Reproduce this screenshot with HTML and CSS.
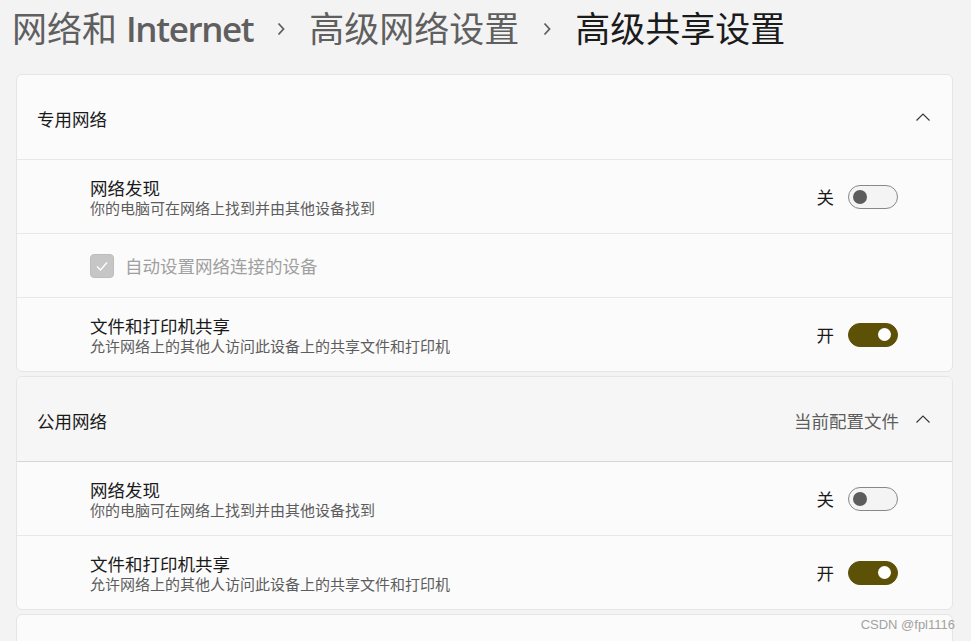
FILE: index.html
```html
<!DOCTYPE html>
<html lang="zh-CN">
<head>
<meta charset="UTF-8">
<meta name="viewport" content="width=device-width, initial-scale=1.0">
<title>高级共享设置</title>
<link rel="stylesheet" href="styles.css">
</head>
<body>

<div class="page">
<h1 class="crumbs">
<span class="crumb">网络和 <span class="latin">Internet</span></span>
<svg class="sep" width="10" height="14" viewBox="0 0 10 14"><path d="M2.5 1.5 L7.5 7 L2.5 12.5" fill="none" stroke="#5f5f5f" stroke-width="1.8"/></svg>
<span class="crumb">高级网络设置</span>
<svg class="sep" width="10" height="14" viewBox="0 0 10 14"><path d="M2.5 1.5 L7.5 7 L2.5 12.5" fill="none" stroke="#5f5f5f" stroke-width="1.8"/></svg>
<span class="crumb current">高级共享设置</span>
</h1>

<!-- 专用网络 -->
<section class="card">
<div class="card-head">
<span class="card-title">专用网络</span>
<div class="head-right">
<svg class="caret" width="16" height="10" viewBox="0 0 16 10"><path d="M1.5 8.5 L8 2 L14.5 8.5" fill="none" stroke="#3a3a3a" stroke-width="1.2"/></svg>
</div>
</div>
<div class="row">
<div class="row-text">
<div class="row-title">网络发现</div>
<div class="row-sub">你的电脑可在网络上找到并由其他设备找到</div>
</div>
<div class="row-ctl"><span class="state">关</span><span class="toggle"><span class="knob"></span></span></div>
</div>
<div class="row row-check">
<span class="checkbox">
<svg width="14" height="12" viewBox="0 0 14 12"><path d="M2 6.5 L5.5 10 L12 2.5" fill="none" stroke="#ffffff" stroke-width="1.4"/></svg>
</span>
<span class="check-label">自动设置网络连接的设备</span>
</div>
<div class="row">
<div class="row-text">
<div class="row-title">文件和打印机共享</div>
<div class="row-sub">允许网络上的其他人访问此设备上的共享文件和打印机</div>
</div>
<div class="row-ctl"><span class="state">开</span><span class="toggle on"><span class="knob"></span></span></div>
</div>
</section>

<!-- 公用网络 -->
<section class="card">
<div class="card-head active">
<span class="card-title">公用网络</span>
<div class="head-right">
<span class="profile">当前配置文件</span>
<svg class="caret" width="16" height="10" viewBox="0 0 16 10"><path d="M1.5 8.5 L8 2 L14.5 8.5" fill="none" stroke="#3a3a3a" stroke-width="1.2"/></svg>
</div>
</div>
<div class="row first-row">
<div class="row-text">
<div class="row-title">网络发现</div>
<div class="row-sub">你的电脑可在网络上找到并由其他设备找到</div>
</div>
<div class="row-ctl"><span class="state">关</span><span class="toggle"><span class="knob"></span></span></div>
</div>
<div class="row">
<div class="row-text">
<div class="row-title">文件和打印机共享</div>
<div class="row-sub">允许网络上的其他人访问此设备上的共享文件和打印机</div>
</div>
<div class="row-ctl"><span class="state">开</span><span class="toggle on"><span class="knob"></span></span></div>
</div>
</section>

<!-- 所有网络 (被截断) -->
<section class="card card-cut"></section>
</div>

<div class="watermark">CSDN @fpl1116</div>

</body>
</html>
```

FILE: styles.css
```css
body {
margin: 0;
height: 641px;
overflow: hidden;
background-color: #f3f3f3;
font-family: "Noto Sans CJK SC", sans-serif;
color: #1a1a1a;
}

.page {
padding: 7px 18px 0 16px;
}

.crumbs {
display: flex;
align-items: center;
gap: 23px;
margin: 0 0 23px -4px;
height: 44px;
font-family: "Open Sans", "Noto Sans CJK SC", sans-serif;
font-size: 35px;
font-weight: 400;
line-height: 44px;
white-space: nowrap;
}

.crumb {
color: #5f5f5f;
}

.crumb.current {
color: #1b1b1b;
}

.latin {
font-weight: 600;
letter-spacing: -1.4px;
}

.sep {
flex: none;
}

.card {
background-color: #fbfbfb;
border: 1px solid #e5e5e5;
border-radius: 6px;
margin-bottom: 4px;
overflow: hidden;
}

.card-head {
display: flex;
align-items: center;
justify-content: space-between;
height: 84px;
padding: 2px 21px 0 20px;
box-sizing: border-box;
font-size: 17.5px;
}

.card-head .caret {
margin-top: -3px;
}

.card-head.active {
background-color: #f6f6f6;
}

.head-right {
display: flex;
align-items: center;
gap: 16px;
}

.profile {
color: #5d5d5d;
}

.row {
display: flex;
align-items: center;
justify-content: space-between;
min-height: 74px;
padding: 0 54px 0 73px;
border-top: 1px solid #e8e8e8;
box-sizing: border-box;
}

.row.first-row {
border-top-color: #d6d6d6;
}

.row-text {
padding-top: 2px;
}

.row-title {
font-size: 17.5px;
line-height: 21px;
}

.row-sub {
font-size: 15px;
line-height: 20px;
color: #5d5d5d;
}

.row-ctl {
display: flex;
align-items: center;
gap: 14px;
font-size: 17.5px;
}

.toggle {
display: flex;
align-items: center;
width: 50px;
height: 24px;
padding: 0 4px;
box-sizing: border-box;
border: 1px solid #888888;
border-radius: 12px;
background-color: #f4f4f4;
}

.knob {
width: 14px;
height: 14px;
border-radius: 50%;
background-color: #5c5c5c;
}

.toggle.on {
justify-content: flex-end;
border-color: #5d5108;
background-color: #5d5108;
padding: 0 6px;
}

.toggle.on .knob {
width: 13px;
height: 13px;
background-color: #ffffff;
}

.row-check {
min-height: 64px;
justify-content: flex-start;
gap: 11px;
}

.checkbox {
display: flex;
align-items: center;
justify-content: center;
width: 24px;
height: 24px;
box-sizing: border-box;
border: 1px solid #bdbdbd;
border-radius: 4px;
background-color: #c6c6c6;
}

.check-label {
font-size: 17.5px;
color: #a0a0a0;
}

.card-cut {
height: 80px;
}

.watermark {
position: absolute;
right: 16px;
bottom: 9px;
font-family: "Liberation Sans", Arial, sans-serif;
font-size: 13px;
line-height: 14px;
color: #a2a2a2;
}
```
